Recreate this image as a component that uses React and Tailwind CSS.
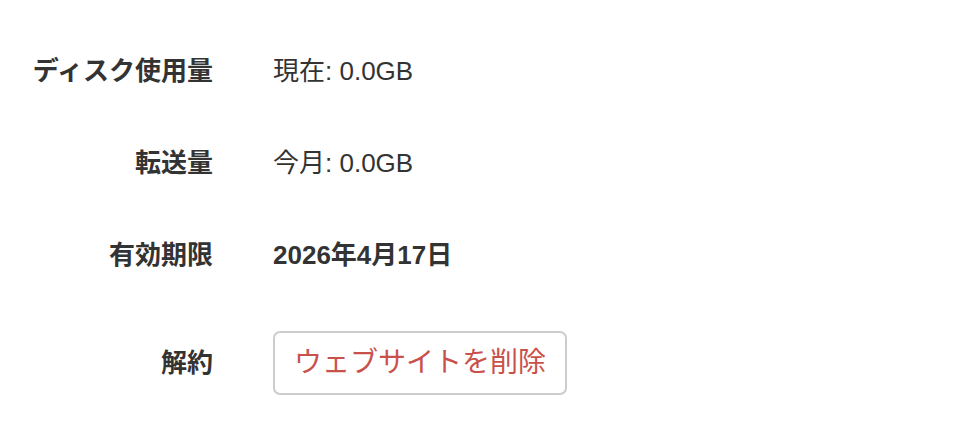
const font = { fontFamily: '"Liberation Sans", "Noto Sans CJK JP", sans-serif' };

const rows = [
  { label: 'ディスク使用量', value: '現在: 0.0GB' },
  { label: '転送量', value: '今月: 0.0GB' },
  { label: '有効期限', value: '2026年4月17日', bold: true },
];

export default function App() {
  return (
    <div className="min-h-screen bg-white pt-[25px] text-[#333]" style={font}>
      {rows.map((r) => (
        <div key={r.label} className="flex h-[92px] items-center">
          <div className="w-[213px] shrink-0 text-right text-[26px] font-bold leading-none">{r.label}</div>
          <div className={`pl-[60px] text-[26px] leading-none ${r.bold ? 'font-bold' : ''}`}>{r.value}</div>
        </div>
      ))}
      <div className="flex items-center pt-[30px]">
        <div className="w-[213px] shrink-0 text-right text-[26px] font-bold leading-none">解約</div>
        <div className="pl-[60px]">
          <button className="flex h-[64px] items-center rounded-[7px] border-2 border-[#cccccc] bg-white px-[19px] text-[28px] leading-none text-[#c9514c]">
            ウェブサイトを削除
          </button>
        </div>
      </div>
    </div>
  );
}
